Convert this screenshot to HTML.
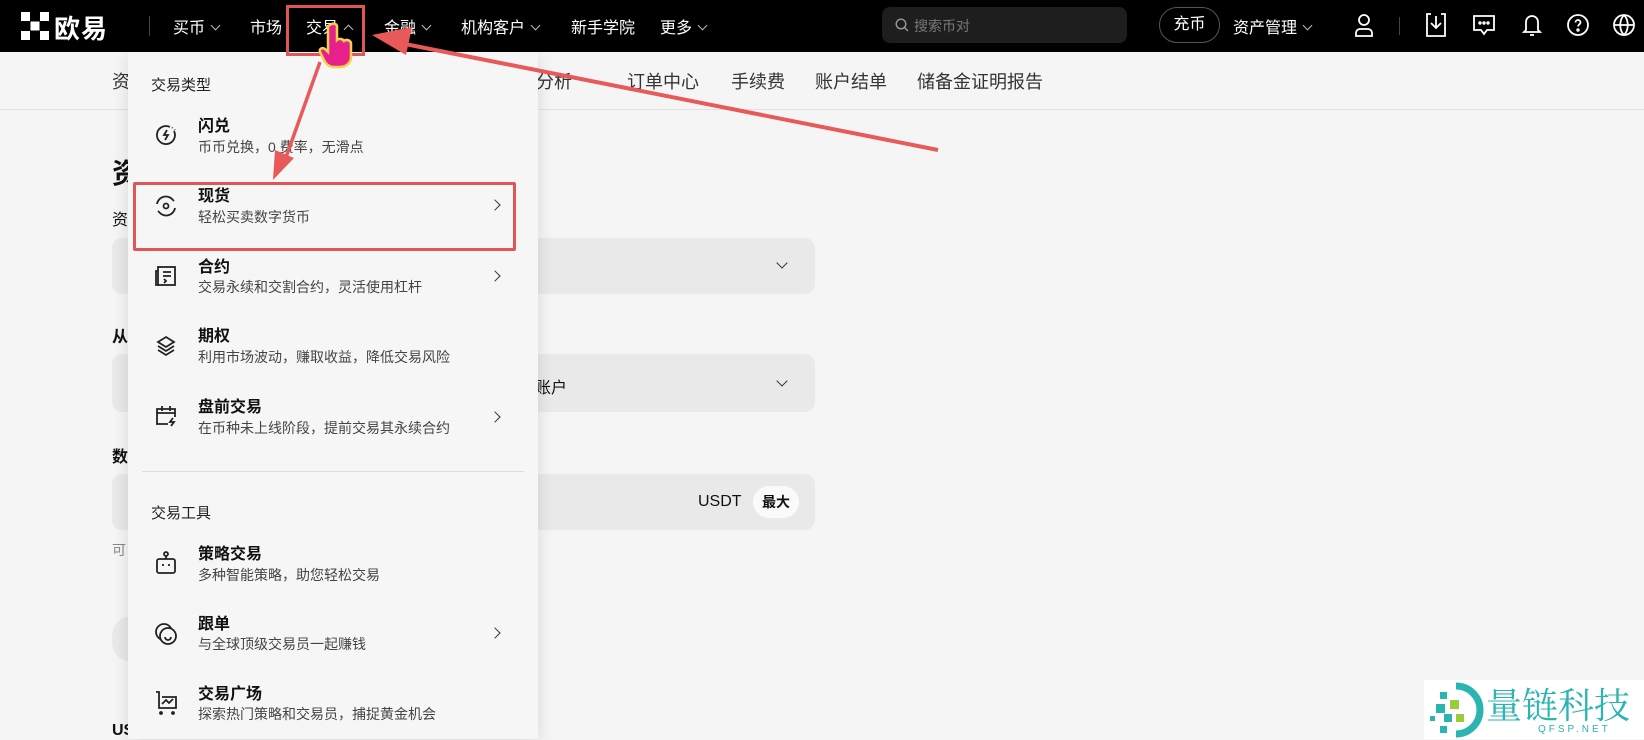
<!DOCTYPE html>
<html><head><meta charset="utf-8"><style>
*{margin:0;padding:0;box-sizing:border-box}
body{width:1644px;height:739px;overflow:hidden;background:#f5f5f5;font-family:"Liberation Sans","Noto Sans CJK SC",sans-serif;position:relative;color:#111}
.a{position:absolute;white-space:nowrap}
.top{position:absolute;left:0;top:0;width:1644px;height:52px;background:#000}
.nav{color:#fff;font-size:16px;top:14px}
.chev{display:inline-block;width:7px;height:7px;border-right:1.3px solid #bbb;border-bottom:1.3px solid #bbb;transform:rotate(45deg);margin-left:7px;position:relative;top:-4px}
.sub2{font-size:18px;color:#333;top:68px}
.box{position:absolute;background:#e9e9e9;border-radius:10px}
.dd{position:absolute;left:128px;top:52px;width:410px;height:687px;background:#f6f6f6;box-shadow:0 4px 16px rgba(0,0,0,.12)}
.t{font-size:16px;font-weight:bold;color:#111}
.s{font-size:14px;color:#444}
.rc{display:inline-block;width:8px;height:8px;border-right:1.5px solid #333;border-top:1.5px solid #333;transform:rotate(45deg)}
.ic{position:absolute;left:154px}
</style></head><body>
<div class="top"></div>
<svg class="a" style="left:21px;top:12px" width="28" height="28" viewBox="0 0 28 28" fill="#fff"><rect x="0" y="0" width="9" height="9"/><rect x="19" y="0" width="9" height="9"/><rect x="9.5" y="9.5" width="9" height="9"/><rect x="0" y="19" width="9" height="9"/><rect x="19" y="19" width="9" height="9"/></svg>
<div class="a" style="left:54px;top:9px;color:#fff;font-size:26px;font-weight:bold;letter-spacing:1px">欧易</div>
<div class="a" style="left:149px;top:16px;width:1px;height:20px;background:#444"></div>
<div class="a nav" style="left:173px">买币<span class="chev"></span></div>
<div class="a nav" style="left:250px">市场</div>
<div class="a nav" style="left:306px">交易<span class="chev" style="transform:rotate(225deg);top:0"></span></div>
<div class="a nav" style="left:384px">金融<span class="chev"></span></div>
<div class="a nav" style="left:461px">机构客户<span class="chev"></span></div>
<div class="a nav" style="left:571px">新手学院</div>
<div class="a nav" style="left:660px">更多<span class="chev"></span></div>
<div class="a" style="left:882px;top:7px;width:245px;height:36px;background:#1e1e1e;border-radius:8px"></div>
<svg class="a" style="left:895px;top:18px" width="14" height="14" viewBox="0 0 14 14" fill="none" stroke="#999" stroke-width="1.4"><circle cx="6" cy="6" r="4.8"/><path d="M9.5 9.5L13 13"/></svg>
<div class="a" style="left:914px;top:16px;color:#777;font-size:14px">搜索币对</div>
<div class="a" style="left:1159px;top:7px;width:61px;height:36px;border:1px solid #555;border-radius:18px;color:#fff;font-size:16px;text-align:center;line-height:34px">充币</div>
<div class="a nav" style="left:1233px">资产管理<span class="chev"></span></div>
<svg class="a" style="left:1352px;top:12px" width="24" height="26" viewBox="0 0 24 26" fill="none" stroke="#fff" stroke-width="1.8"><circle cx="12" cy="8" r="5"/><path d="M4 24v-3a4 4 0 014-4h8a4 4 0 014 4v3z"/></svg>
<div class="a" style="left:1399px;top:17px;width:1px;height:18px;background:#444"></div>
<svg class="a" style="left:1424px;top:12px" width="24" height="26" viewBox="0 0 24 26" fill="none" stroke="#fff" stroke-width="1.8"><path d="M7 2H3v22h18V2h-4"/><path d="M12 4v12M7 11l5 5 5-5"/></svg>
<svg class="a" style="left:1472px;top:13px" width="24" height="24" viewBox="0 0 24 24" fill="none" stroke="#fff" stroke-width="1.8"><path d="M2 3h20v14H15l-3 4-3-4H2z"/><circle cx="8" cy="10" r=".8" fill="#fff"/><circle cx="12" cy="10" r=".8" fill="#fff"/><circle cx="16" cy="10" r=".8" fill="#fff"/></svg>
<svg class="a" style="left:1520px;top:12px" width="24" height="26" viewBox="0 0 24 26" fill="none" stroke="#fff" stroke-width="1.8"><path d="M6 18V10a6 6 0 0112 0v8l2 2H4z"/><path d="M10 23h4"/></svg>
<svg class="a" style="left:1566px;top:13px" width="24" height="24" viewBox="0 0 24 24" fill="none" stroke="#fff" stroke-width="1.8"><circle cx="12" cy="12" r="10"/><path d="M9.5 9.5a2.5 2.5 0 115 0c0 1.8-2.5 2-2.5 4"/><circle cx="12" cy="17" r=".8" fill="#fff"/></svg>
<svg class="a" style="left:1612px;top:13px" width="24" height="24" viewBox="0 0 24 24" fill="none" stroke="#fff" stroke-width="1.8"><circle cx="12" cy="12" r="10"/><path d="M2 12h20M12 2c-5 5-5 15 0 20M12 2c5 5 5 15 0 20"/></svg>

<div class="a sub2" style="left:112px">资</div>
<div class="a sub2" style="left:500px">资产分析</div>
<div class="a sub2" style="left:627px">订单中心</div>
<div class="a sub2" style="left:731px">手续费</div>
<div class="a sub2" style="left:815px">账户结单</div>
<div class="a sub2" style="left:917px">储备金证明报告</div>
<div class="a" style="left:0;top:109px;width:1644px;height:1px;background:#e2e2e2"></div>

<div class="a" style="left:112px;top:152px;font-size:28px;font-weight:bold">资</div>
<div class="a" style="left:112px;top:206px;font-size:16px">资</div>
<div class="box" style="left:112px;top:238px;width:703px;height:56px"></div>
<span class="a rc" style="left:778px;top:259px;transform:rotate(135deg)"></span>
<div class="a" style="left:112px;top:323px;font-size:16px;font-weight:bold">从</div>
<div class="box" style="left:112px;top:354px;width:703px;height:58px"></div>
<div class="a" style="left:535px;top:374px;font-size:16px">账户</div>
<span class="a rc" style="left:778px;top:377px;transform:rotate(135deg)"></span>
<div class="a" style="left:112px;top:443px;font-size:16px;font-weight:bold">数</div>
<div class="box" style="left:112px;top:474px;width:703px;height:56px"></div>
<div class="a" style="left:698px;top:493px;font-size:16px">USDT</div>
<div class="a" style="left:753px;top:486px;width:46px;height:32px;background:#fafafa;border-radius:16px;font-size:14px;font-weight:bold;text-align:center;line-height:32px">最大</div>
<div class="a" style="left:112px;top:540px;font-size:14px;color:#888">可</div>
<div class="box" style="left:112px;top:616px;width:40px;height:46px;border-radius:23px"></div>
<div class="a" style="left:112px;top:722px;font-size:16px;font-weight:bold">US</div>

<div class="dd"></div>
<div class="a" style="left:151px;top:74px;font-size:15px;color:#222">交易类型</div>
<svg class="ic" style="top:123px" width="24" height="24" viewBox="0 0 24 24" fill="none" stroke="#222" stroke-width="1.8"><path d="M20 8A9 9 0 1116 4"/><path d="M18 4.5l.5.5M20.5 6.5l.3.6" stroke-dasharray="1 2"/><path d="M13 7l-3 5h4l-3 5"/></svg>
<div class="a t" style="left:198px;top:112px">闪兑</div>
<div class="a s" style="left:198px;top:137px">币币兑换，0 费率，无滑点</div>
<svg class="ic" style="top:194px" width="24" height="24" viewBox="0 0 24 24" fill="none" stroke="#222" stroke-width="1.8"><path d="M3 10a9 9 0 0116-4l1 1M21 14a9 9 0 01-16 4l-1-1"/><circle cx="12" cy="12" r="2.5"/></svg>
<div class="a t" style="left:198px;top:182px">现货</div>
<div class="a s" style="left:198px;top:207px">轻松买卖数字货币</div>
<span class="a rc" style="left:491px;top:201px"></span>
<svg class="ic" style="top:264px" width="24" height="24" viewBox="0 0 24 24" fill="none" stroke="#222" stroke-width="1.8"><rect x="4" y="3" width="17" height="18"/><path d="M4 7H2v14h2M9 8h8M9 12h8M10 15l2 2-2 2"/></svg>
<div class="a t" style="left:198px;top:253px">合约</div>
<div class="a s" style="left:198px;top:277px">交易永续和交割合约，灵活使用杠杆</div>
<span class="a rc" style="left:491px;top:272px"></span>
<svg class="ic" style="top:334px" width="24" height="24" viewBox="0 0 24 24" fill="none" stroke="#222" stroke-width="1.8"><path d="M12 3l8 5-8 5-8-5z"/><path d="M4 12l8 5 8-5M4 16l8 5 8-5"/></svg>
<div class="a t" style="left:198px;top:322px">期权</div>
<div class="a s" style="left:198px;top:347px">利用市场波动，赚取收益，降低交易风险</div>
<svg class="ic" style="top:404px" width="24" height="24" viewBox="0 0 24 24" fill="none" stroke="#222" stroke-width="1.8"><path d="M14 20H3V5h18v8M3 9h18M8 2v5M16 2v5"/><path d="M19 14l-3 4h4l-3 4"/></svg>
<div class="a t" style="left:198px;top:393px">盘前交易</div>
<div class="a s" style="left:198px;top:418px">在币种未上线阶段，提前交易其永续合约</div>
<span class="a rc" style="left:491px;top:413px"></span>
<div class="a" style="left:142px;top:471px;width:382px;height:1px;background:#ddd"></div>
<div class="a" style="left:151px;top:502px;font-size:15px;color:#222">交易工具</div>
<svg class="ic" style="top:550px" width="24" height="26" viewBox="0 0 24 26" fill="none" stroke="#222" stroke-width="1.8"><circle cx="12" cy="4" r="2"/><path d="M12 6v3"/><rect x="3" y="9" width="18" height="14" rx="2"/><path d="M9 14v2M15 14v2"/></svg>
<div class="a t" style="left:198px;top:540px">策略交易</div>
<div class="a s" style="left:198px;top:565px">多种智能策略，助您轻松交易</div>
<svg class="ic" style="top:621px" width="26" height="26" viewBox="0 0 26 26" fill="none" stroke="#222" stroke-width="1.8"><circle cx="10" cy="11" r="8"/><circle cx="14" cy="15" r="8" fill="#f6f6f6"/><path d="M11 16a3 3 0 006 0"/></svg>
<div class="a t" style="left:198px;top:610px">跟单</div>
<div class="a s" style="left:198px;top:634px">与全球顶级交易员一起赚钱</div>
<span class="a rc" style="left:491px;top:629px"></span>
<svg class="ic" style="top:690px" width="26" height="26" viewBox="0 0 26 26" fill="none" stroke="#222" stroke-width="1.8"><path d="M2 2h3v16h17V7H8"/><path d="M8 14l4-4 3 3 4-4"/><circle cx="7" cy="23" r="1" fill="#222"/><circle cx="19" cy="23" r="1" fill="#222"/></svg>
<div class="a t" style="left:198px;top:680px">交易广场</div>
<div class="a s" style="left:198px;top:704px">探索热门策略和交易员，捕捉黄金机会</div>

<div class="a" style="left:286px;top:5px;width:79px;height:51px;border:3px solid #e05555"></div>
<div class="a" style="left:133px;top:182px;width:383px;height:69px;border:3px solid #e05555;border-radius:2px"></div>
<svg class="a" style="left:0;top:0" width="1644" height="739" viewBox="0 0 1644 739">
<path d="M938 150L395 42" stroke="#e85a5a" stroke-width="4"/>
<path d="M372 35l40 -8l-6 28z" fill="#e85a5a"/>
<path d="M320 62L285 160" stroke="#e85a5a" stroke-width="3.5"/>
<path d="M273 180l2 -30l19 8z" fill="#e85a5a"/>
<path d="M330 25c2-2 6-2 7 1v14c2-2 6-1 7 1c2-2 6-1 7 2v14c0 6-5 10-11 10h-6c-5 0-8-3-10-7l-4-8c-1-3 2-5 5-3l3 3V26z" fill="#e8208c" stroke="#f2d24a" stroke-width="2.5"/>
</svg>

<div class="a" style="left:1424px;top:680px;width:220px;height:59px;background:#fff"></div>
<svg class="a" style="left:1426px;top:682px" width="60" height="56" viewBox="0 0 60 56"><path d="M30 4a24 24 0 010 48" fill="none" stroke="#2bb5b0" stroke-width="7"/><rect x="14" y="10" width="7" height="7" fill="#2bb5b0"/><rect x="24" y="18" width="9" height="9" fill="#9acd3a"/><rect x="10" y="22" width="9" height="9" fill="#2bb5b0"/><rect x="18" y="32" width="8" height="8" fill="#2bb5b0"/><rect x="30" y="32" width="8" height="8" fill="#9acd3a"/><rect x="14" y="44" width="7" height="7" fill="#2bb5b0"/><rect x="4" y="34" width="5" height="5" fill="#2bb5b0"/></svg>
<div class="a" style="left:1486px;top:684px;font-size:36px;color:#2bb5b0;font-family:'Noto Serif CJK SC',serif;line-height:40px">量链科技</div>
<div class="a" style="left:1538px;top:724px;font-size:10px;color:#2bb5b0;letter-spacing:3px">QFSP.NET</div>
</body></html>
